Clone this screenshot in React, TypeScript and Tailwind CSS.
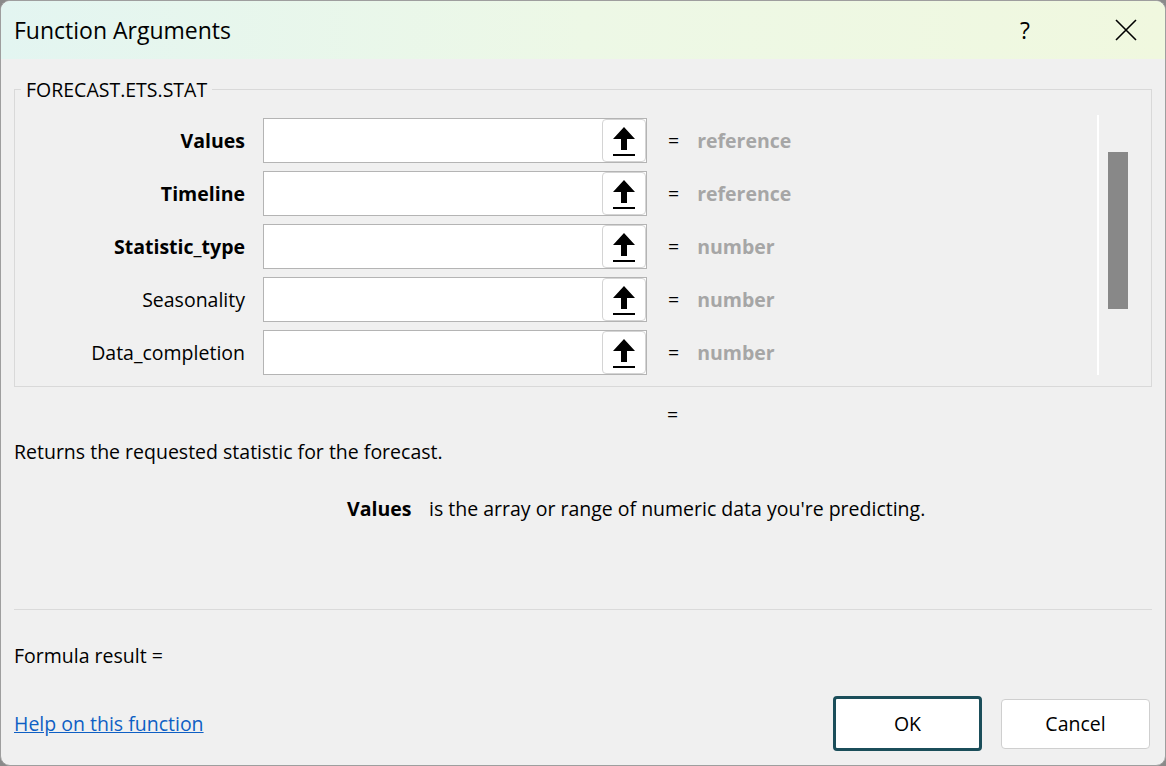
import type { ReactNode } from "react";

const font = { fontFamily: '"Open Sans", "Noto Sans", sans-serif' };

const args = [
	{ name: "Values", bold: true, hint: "reference" },
	{ name: "Timeline", bold: true, hint: "reference" },
	{ name: "Statistic_type", bold: true, hint: "number" },
	{ name: "Seasonality", bold: false, hint: "number" },
	{ name: "Data_completion", bold: false, hint: "number" },
];

const PickIcon = () => (
	<svg width="26" height="34" viewBox="0 0 26 34">
		<path d="M13 3 L24 15 L16 15 L16 26 L10 26 L10 15 L2 15 Z" fill="#000" />
		<rect x="2" y="30" width="22" height="2" fill="#000" />
	</svg>
);

const ArgRow = ({ name, bold, hint }: { name: string; bold: boolean; hint: string }) => {
	return (
		<div className="flex items-center h-[45px]">
			<div
				className={`w-[248px] text-right text-[19.5px] text-black pr-[18px] ${bold ? "font-bold" : ""}`}
			>
				{name}
			</div>
			<div className="flex w-[384px] h-[45px] bg-white border border-[#b4b4b4]">
				<div className="flex-1" />
				<div className="w-[44px] h-full flex items-center justify-center bg-white border border-[#d4d4d4] rounded-[4px]">
					<PickIcon />
				</div>
			</div>
			<span className="ml-[21px] text-[19.5px] text-black">=</span>
			<span className="ml-[18px] text-[19.5px] font-bold text-[#a6a6a6]">{hint}</span>
		</div>
	);
};

const Button = ({ children, primary }: { children: ReactNode; primary?: boolean }) => (
	<button
		className={`flex items-center justify-center bg-white text-[19.5px] text-black rounded-[4px] ${
			primary
				? "w-[149px] h-[55px] border-[3px] border-[#1b4e5a]"
				: "w-[149px] h-[50px] border border-[#cfcfcf]"
		}`}
	>
		{children}
	</button>
);

export default function App() {
	return (
		<div className="w-[1166px] h-[766px] bg-[#8a8a8a] overflow-hidden" style={font}>
			<div className="w-full h-full flex flex-col bg-[#f0f0f0] rounded-[10px] border border-[#9e9e9e] overflow-hidden">
				<div className="h-[58px] flex items-center shrink-0 bg-gradient-to-r from-[#e3f5f1] via-[#edf8e6] to-[#f0f8df]">
					<span className="ml-[13px] text-[23px] text-black">Function Arguments</span>
					<span className="ml-auto text-[23px] text-black mr-[85px]">?</span>
					<svg width="22" height="22" viewBox="0 0 22 22" className="mr-[28px]">
						<path d="M1 1 L21 21 M21 1 L1 21" stroke="#000" strokeWidth="1.6" />
					</svg>
				</div>

				<div className="flex flex-col px-[13px]">
					<div className="relative mt-[30px] h-[298px] border border-[#d9d9d9]">
						<span className="absolute left-[6px] -top-[15px] px-[5px] bg-[#f0f0f0] text-[19.5px] text-black">
							FORECAST.ETS.STAT
						</span>
						<div className="flex h-full">
							<div className="flex flex-col gap-[8px] pt-[28px] flex-1">
								{args.map((a) => (
									<ArgRow key={a.name} {...a} />
								))}
							</div>
							<div className="relative w-[54px] flex justify-end pr-[23px] pt-[25px]">
								<div className="absolute left-0 top-[25px] h-[260px] w-[2px] bg-white" />
								<div className="mt-[37px] w-[20px] h-[157px] bg-[#888888]" />
							</div>
						</div>
					</div>

					<div className="h-[56px] flex items-center pl-[653px] text-[19.5px] text-black">=</div>
					<p className="text-[19.5px] text-black leading-[24px] mt-[-3px]">
						Returns the requested statistic for the forecast.
					</p>
					<div className="flex mt-[33px] text-[19.5px] text-black leading-[24px]">
						<span className="ml-[333px] w-[82px] font-bold">Values</span>
						<span>is the array or range of numeric data you're predicting.</span>
					</div>
					<div className="mt-[88px] h-px bg-[#dadada]" />
					<div className="mt-[34px] text-[19.5px] text-black leading-[24px]">Formula result =</div>
					<div className="flex items-center mt-[28px]">
						<a className="text-[19.5px] text-[#0e5fc4] underline">Help on this function</a>
						<div className="ml-auto flex items-center gap-[19px] mr-[2px]">
							<Button primary>OK</Button>
							<Button>Cancel</Button>
						</div>
					</div>
				</div>
			</div>
		</div>
	);
}
